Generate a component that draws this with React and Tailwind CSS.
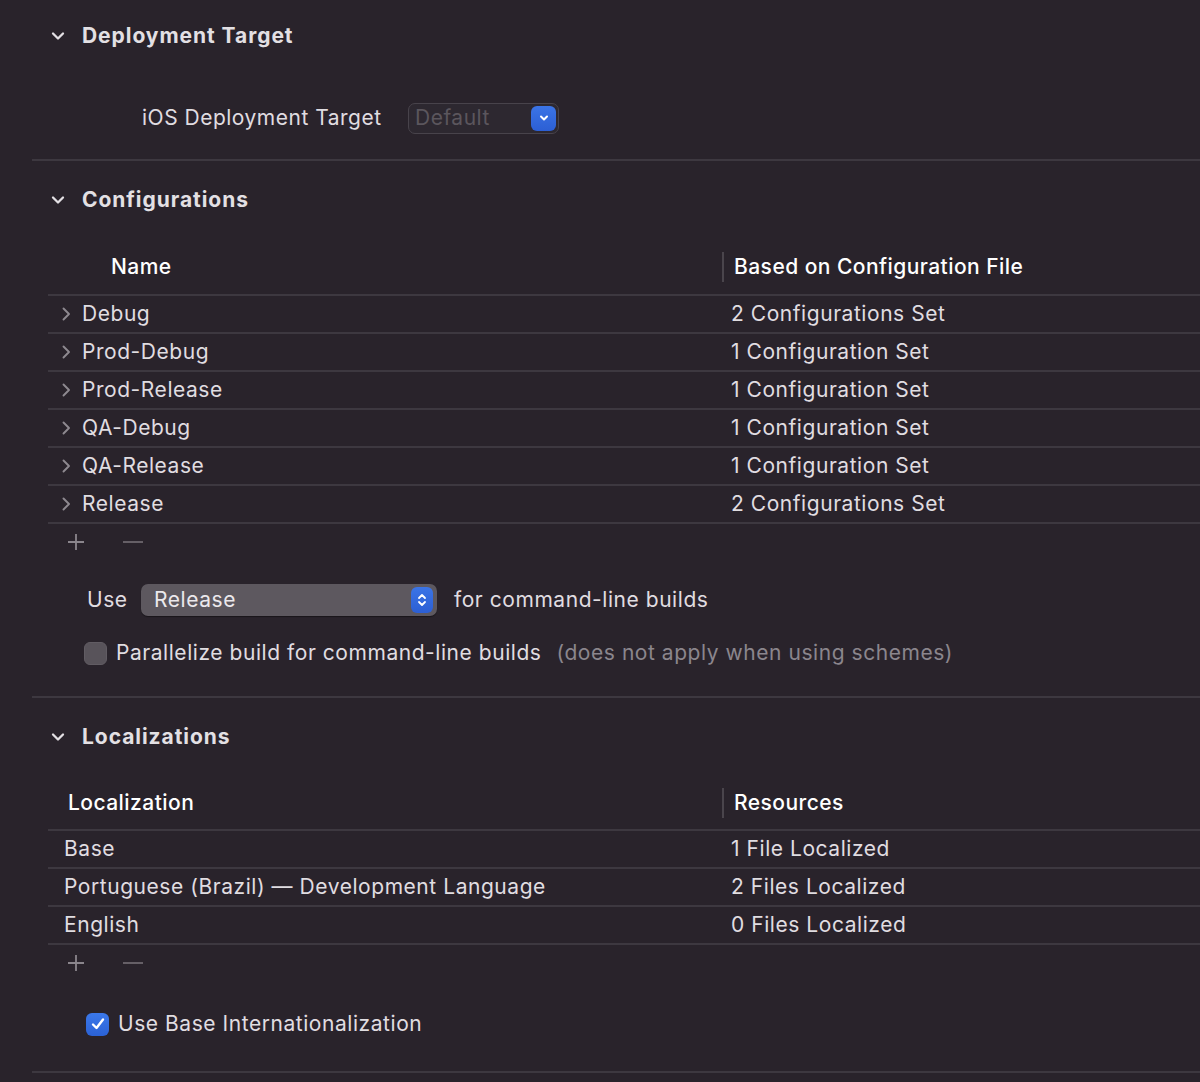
import React from 'react';

const font = { fontFamily: 'Inter, "Noto Sans", sans-serif' };

function Chevron({ open }) {
  return (
    <svg width="14" height="16" viewBox="0 0 14 16" className="shrink-0">
      {open ? (
        <path d="M2 5.5 L7 10.5 L12 5.5" fill="none" stroke="#e3e0e4" strokeWidth="2.3" strokeLinecap="round" strokeLinejoin="round" />
      ) : (
        <path d="M4.5 2.5 L10 8 L4.5 13.5" fill="none" stroke="#8e8990" strokeWidth="1.9" strokeLinecap="round" strokeLinejoin="round" />
      )}
    </svg>
  );
}

function SectionHeader({ title, height }) {
  return (
    <div className={`flex items-center ${height}`}>
      <div className="w-[50px] flex justify-center pl-[2px]">
        <Chevron open />
      </div>
      <span className="text-[21px] font-bold text-[#e3e0e4] tracking-[0.95px]">{title}</span>
    </div>
  );
}

function Separator() {
  return <div className="h-[2px] bg-[#3d3840]" />;
}

function PlusMinus() {
  return (
    <div className="h-[36px] flex items-center pl-[18px] text-[#8a858c]">
      <svg width="20" height="20" viewBox="0 0 20 20">
        <path d="M10 2 V18 M2 10 H18" stroke="currentColor" strokeWidth="1.8" />
      </svg>
      <svg width="22" height="20" viewBox="0 0 22 20" className="ml-[36px] text-[#6c676e]">
        <path d="M1 10 H21" stroke="currentColor" strokeWidth="1.8" />
      </svg>
    </div>
  );
}

function TableHeader({ left, right, leftPad, height }) {
  return (
    <div className={`flex items-center border-b-2 border-[#3d3840] text-[21px] font-medium text-white tracking-[0.45px] ${height}`}>
      <div className={`w-[674px] shrink-0 ${leftPad}`}>{left}</div>
      <div className="flex items-center">
        <div className="w-[2px] h-[30px] bg-[#4a454c]" />
        <span className="ml-[10px]">{right}</span>
      </div>
    </div>
  );
}

function Row({ name, value, expandable }) {
  return (
    <div className="h-[38px] flex items-center border-b-2 border-[#3d3840] text-[21px] text-[#e0dde1] tracking-[0.55px]">
      <div className="w-[674px] shrink-0 flex items-center">
        {expandable ? (
          <>
            <div className="w-[34px] flex justify-center pl-[2px]">
              <Chevron />
            </div>
            <span>{name}</span>
          </>
        ) : (
          <span className="pl-[16px]">{name}</span>
        )}
      </div>
      <span className="pl-[9px]">{value}</span>
    </div>
  );
}

export default function App() {
  const configs = [
    ['Debug', '2 Configurations Set'],
    ['Prod-Debug', '1 Configuration Set'],
    ['Prod-Release', '1 Configuration Set'],
    ['QA-Debug', '1 Configuration Set'],
    ['QA-Release', '1 Configuration Set'],
    ['Release', '2 Configurations Set'],
  ];
  const locs = [
    ['Base', '1 File Localized'],
    ['Portuguese (Brazil) — Development Language', '2 Files Localized'],
    ['English', '0 Files Localized'],
  ];

  return (
    <div className="w-[1200px] h-[1082px] overflow-hidden bg-[#29232b] pl-[32px]" style={font}>
      {/* Deployment Target */}
      <div className="h-[72px] flex items-center">
        <div className="w-[50px] flex justify-center pl-[2px]">
          <Chevron open />
        </div>
        <span className="text-[21px] font-bold text-[#e3e0e4] tracking-[0.95px]">Deployment Target</span>
      </div>
      <div className="mt-[30px] h-[32px] flex items-center text-[21px] tracking-[0.5px]">
        <span className="ml-[110px] w-[266px] shrink-0 text-[#e0dde1]">iOS Deployment Target</span>
        <div className="w-[151px] h-[31px] rounded-[7px] border border-[#48434b] bg-[#2d2830] flex items-center justify-between pl-[6px] pr-[2px]">
          <span className="text-[#5b565d]">Default</span>
          <div className="w-[25px] h-[25px] rounded-[6px] bg-gradient-to-b from-[#3b74e6] to-[#2c5fd4] flex items-center justify-center">
            <svg width="12" height="12" viewBox="0 0 12 12">
              <path d="M3 4.5 L6 7.5 L9 4.5" fill="none" stroke="white" strokeWidth="2" strokeLinecap="round" strokeLinejoin="round" />
            </svg>
          </div>
        </div>
      </div>
      <div className="mt-[25px]">
        <Separator />
      </div>

      {/* Configurations */}
      <SectionHeader title="Configurations" height="h-[78px]" />
      <div className="ml-[16px]">
        <TableHeader left="Name" right="Based on Configuration File" leftPad="pl-[63px]" height="h-[57px]" />
        {configs.map(([n, v]) => (
          <Row key={n} name={n} value={v} expandable />
        ))}
        <PlusMinus />
      </div>
      <div className="mt-[24px] h-[32px] flex items-center text-[21px] tracking-[0.55px] text-[#e0dde1]">
        <span className="ml-[55px] w-[54px] shrink-0">Use</span>
        <div className="w-[296px] h-[32px] rounded-[7px] bg-[#5d585f] flex items-center justify-between pl-[13px] pr-[4px] shadow-[0_1px_1px_rgba(0,0,0,0.4)]">
          <span className="text-[#ebe8ec]">Release</span>
          <div className="w-[22px] h-[26px] rounded-[6px] bg-gradient-to-b from-[#3b74e6] to-[#2c5fd4] flex items-center justify-center">
            <svg width="12" height="18" viewBox="0 0 12 18">
              <path d="M3 7 L6 4 L9 7 M3 11 L6 14 L9 11" fill="none" stroke="white" strokeWidth="1.8" strokeLinecap="round" strokeLinejoin="round" />
            </svg>
          </div>
        </div>
        <span className="ml-[17px]">for command-line builds</span>
      </div>
      <div className="mt-[21px] h-[32px] flex items-center text-[21px] tracking-[0.55px]">
        <div className="ml-[52px] w-[23px] h-[23px] rounded-[6px] bg-[#58535a] border border-[#615c63]" />
        <span className="ml-[9px] text-[#e0dde1]">Parallelize build for command-line builds</span>
        <span className="ml-[15px] text-[#8b868d]">(does not apply when using schemes)</span>
      </div>
      <div className="mt-[27px]">
        <Separator />
      </div>

      {/* Localizations */}
      <SectionHeader title="Localizations" height="h-[78px]" />
      <div className="ml-[16px]">
        <TableHeader left="Localization" right="Resources" leftPad="pl-[20px]" height="h-[55px]" />
        {locs.map(([n, v]) => (
          <Row key={n} name={n} value={v} />
        ))}
        <PlusMinus />
      </div>
      <div className="mt-[27px] h-[32px] flex items-center text-[21px] tracking-[0.55px]">
        <div className="ml-[54px] w-[23px] h-[23px] rounded-[6px] bg-gradient-to-b from-[#3b78ea] to-[#2b62d6] flex items-center justify-center">
          <svg width="16" height="16" viewBox="0 0 16 16">
            <path d="M3 8.5 L6.5 12 L13 3.5" fill="none" stroke="white" strokeWidth="2.4" strokeLinecap="round" strokeLinejoin="round" />
          </svg>
        </div>
        <span className="ml-[9px] text-[#e0dde1]">Use Base Internationalization</span>
      </div>
      <div className="mt-[31px]">
        <Separator />
      </div>
    </div>
  );
}
